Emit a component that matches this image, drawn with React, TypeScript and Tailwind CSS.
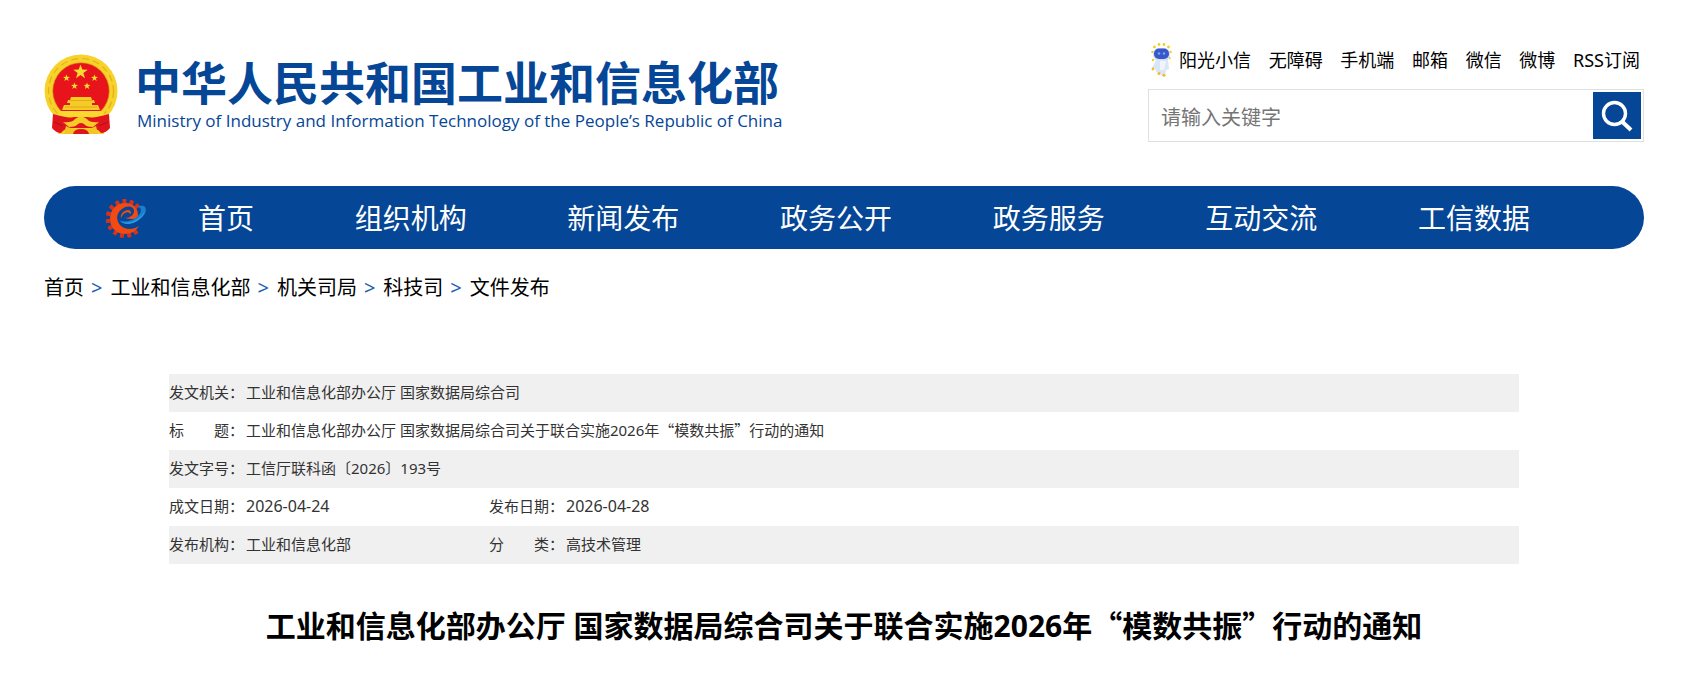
const TOP_LINKS = ["无障碍", "手机端", "邮箱", "微信", "微博", "RSS订阅"];

const NAV_ITEMS = [
  "首页",
  "组织机构",
  "新闻发布",
  "政务公开",
  "政务服务",
  "互动交流",
  "工信数据",
];

const CRUMBS = ["首页", "工业和信息化部", "机关司局", "科技司", "文件发布"];

const STAR = "M0 -10 2.4 -3.2 9.5 -3.1 3.8 1.2 5.9 8.1 0 4 -5.9 8.1 -3.8 1.2 -9.5 -3.1 -2.4 -3.2Z";

const GEAR_TEETH = [52, 76, 100, 124, 148, 172, 196, 220, 244, 268, 292, 314];

function Emblem() {
  return (
    <svg viewBox="0 0 74 80" className="h-20 w-[74px] shrink-0" aria-hidden="true">
      <circle cx="37" cy="37" r="36.5" fill="#f7d22b" />
      <circle cx="37" cy="37" r="32.5" fill="none" stroke="#e3b01c" strokeWidth="1.2" strokeDasharray="7 4" />
      <path d="M20 56h34l6 24H14z" fill="#f7d22b" />
      <circle cx="37" cy="37" r="28.3" fill="#e8141c" stroke="#d8a01a" strokeWidth="0.7" />
      <g fill="#f9dc2f">
        <path d={STAR} transform="translate(36.500 18) scale(0.76)" />
        <path d={STAR} transform="translate(22.500 24) scale(0.36)" />
        <path d={STAR} transform="translate(50.500 24) scale(0.36)" />
        <path d={STAR} transform="translate(30.500 32) scale(0.36)" />
        <path d={STAR} transform="translate(43 32) scale(0.36)" />
      </g>
      <path d="M27 43h20l1 3h2l1 3h-3v2h6l2 5H18l2-5h6v-2h-3l1-3h2z" fill="#f5cb25" />
      <path d="M25 46.500h24M21 53h32" stroke="#dba31c" strokeWidth="0.8" />
      <path d="M17 57h40l5 4-3 2H15l-3-2z" fill="#f9d92f" />
      <path d="M9 60q14 4 22 4h12q8 0 22-4l1 14q-4 5-9 5-4-5-10-5H27q-6 0-10 5-5 0-9-5z" fill="#e0141d" />
      <path d="M19 68q9 1 12-3 6-5 12 0 3 4 12 3l-6 5q-7 0-9-3-3-2-6 0-2 3-9 3z" fill="#f5cb25" />
      <path d="M22 72q4 3 15 3t15-3l2 8H20z" fill="#f3c423" />
      <path d="M29 80q1-5 8-5t8 5z" fill="#e0141d" />
      <path d="M10 68l9 4M64 68l-9 4" stroke="#b80d14" strokeWidth="1" />
    </svg>
  );
}

function Robot() {
  return (
    <svg viewBox="0 0 22 34" className="h-[34px] w-[22px] shrink-0" aria-hidden="true">
      <g fill="#f8cb2c">
        <circle cx="1.500" cy="9" r="1.3" />
        <circle cx="3.500" cy="4" r="1.4" />
        <circle cx="8" cy="1.500" r="1.4" />
        <circle cx="13" cy="1.500" r="1.4" />
        <circle cx="17.500" cy="4" r="1.4" />
        <circle cx="19.500" cy="9" r="1.3" />
        <circle cx="2" cy="17" r="1.2" />
        <circle cx="18.500" cy="15" r="1.2" />
      </g>
      <rect x="2" y="5" width="17" height="13" rx="6" fill="#cfe0f7" />
      <rect x="3" y="5.500" width="15" height="10.500" rx="5" fill="#3a57c8" />
      <circle cx="8" cy="10.500" r="1.3" fill="#6fa6ff" />
      <circle cx="13" cy="10.500" r="1.3" fill="#6fa6ff" />
      <path d="M5 17h12l1 9-3 1-1 6h-3l-2-3-4-1-1-4H1z" fill="#d9e6f6" />
      <path d="M9 18h6l-2 9H9z" fill="#f1f5fb" />
      <g fill="#f5b92c">
        <circle cx="2" cy="26" r="1.4" />
        <circle cx="8" cy="30.500" r="1.5" />
        <circle cx="13" cy="32.300" r="1.5" />
      </g>
    </svg>
  );
}

function GearLogo() {
  return (
    <svg viewBox="0 0 42 40" className="h-10 w-[42px]" aria-hidden="true">
      <g fill="#d8301c">
        {GEAR_TEETH.map((deg) => (
          <rect key={deg} x="34" y="18.500" width="4.500" height="4" rx="0.5" transform={`rotate(${deg} 19 20.500)`} />
        ))}
      </g>
      <path
        d="M32 17C32 9 26 5 19 5 10 5 4 12 4 21c0 9 7 15 15 15 6 0 11-3 14-8-6 4-14 4-19-1-4-5-4-12 2-16 5-4 12-3 12 2 0 4-4 7-9 7 7 2 13 1 13-3z"
        fill="#f24a12"
      />
      <path d="M15 20c-1-4 3-8 7-8 3 0 4 3 2 4-1-2-3-2-5-1-2 1-3 3-4 5z" fill="#f24a12" />
      <path d="M13 22c4 5 12 5 18 1 6-3 11-10 8-14-2-2-5-1-8 0 5 0 5 5 1 9-5 5-13 7-19 4z" fill="#1a7fd0" />
      <path d="M15 24c5 3 11 2 16-1 4-3 7-6 8-10-3 5-7 8-11 10s-9 2-13 1z" fill="#2fa0e6" />
    </svg>
  );
}

function SearchIcon() {
  return (
    <svg viewBox="0 0 32 32" className="size-8" fill="none" stroke="currentColor" aria-hidden="true">
      <circle cx="13.500" cy="13.500" r="11" strokeWidth="3.4" />
      <path d="M21 21.500l9 8.500" strokeWidth="4" />
    </svg>
  );
}

function Header() {
  return (
    <header className="flex items-start justify-between">
      <a href="#" className="mt-[54px] flex items-start text-[#054696]">
        <Emblem />
        <span className="ml-[17px] block">
          <span className="block text-[46px] leading-[56px] font-bold whitespace-nowrap">
            中华人民共和国工业和信息化部
          </span>
          <span className="ml-0.5 block font-['Open_Sans',sans-serif] text-[17px] leading-[22px] whitespace-nowrap">
            Ministry of Industry and Information Technology of the People’s Republic of China
          </span>
        </span>
      </a>

      <div className="mt-[42px] w-[496px]">
        <div className="flex h-[36px] items-center justify-between pr-1 pl-[3px] text-[18px] whitespace-nowrap text-black">
          <a href="#" className="flex items-center gap-1.5">
            <Robot />
            阳光小信
          </a>
          {TOP_LINKS.map((label) => (
            <a key={label} href="#">
              {label}
            </a>
          ))}
        </div>
        <form className="mt-[11px] flex h-[53px] items-center border border-[#e0e0e0] pr-0.5">
          <input
            type="text"
            aria-label="请输入关键字"
            placeholder="请输入关键字"
            className="h-full min-w-0 flex-1 px-3 pt-1 text-[20px] outline-none placeholder:text-[#757575]"
          />
          <button
            type="button"
            aria-label="搜索"
            className="flex h-[47px] w-12 items-center justify-center bg-[#054696] text-white"
          >
            <SearchIcon />
          </button>
        </form>
      </div>
    </header>
  );
}

function Nav() {
  return (
    <nav className="mt-[44px] flex h-[63px] items-center rounded-full bg-[#054696] pr-[114px] pl-[62px] text-white">
      <GearLogo />
      <div className="ml-[50px] flex flex-1 justify-between text-[28px] leading-10 whitespace-nowrap">
        {NAV_ITEMS.map((item) => (
          <a key={item} href="#">
            {item}
          </a>
        ))}
      </div>
    </nav>
  );
}

function Breadcrumb() {
  return (
    <div className="mt-6 flex h-[30px] items-center gap-[7px] text-[20px] text-black">
      {CRUMBS.map((crumb, i) => (
        <span key={crumb} className="flex gap-2">
          {i > 0 && <span className="text-[#1a5fb4]">&gt;</span>}
          <a href="#">{crumb}</a>
        </span>
      ))}
    </div>
  );
}

// The curly quotes need the full-width glyphs of the CJK font
function DocTitle() {
  return (
    <>
      工业和信息化部办公厅 国家数据局综合司关于联合实施2026年
      <span className="font-['Noto_Sans_CJK_SC',sans-serif]">“</span>
      模数共振
      <span className="font-['Noto_Sans_CJK_SC',sans-serif]">”</span>
      行动的通知
    </>
  );
}

function DocInfo() {
  return (
    <table className="w-full table-fixed text-left text-[15px] leading-5 text-[#333333] [&_td]:pb-0.5 [&_th]:pb-0.5">
      <colgroup>
        <col className="w-[77px]" />
        <col className="w-[243px]" />
        <col className="w-[77px]" />
        <col />
      </colgroup>
      <tbody>
        <tr className="h-[38px] bg-[#f0f0f0]">
          <th className="font-normal">发文机关：</th>
          <td colSpan={3}>工业和信息化部办公厅 国家数据局综合司</td>
        </tr>
        <tr className="h-[38px]">
          <th className="font-normal">标　　题：</th>
          <td colSpan={3}>
            <DocTitle />
          </td>
        </tr>
        <tr className="h-[38px] bg-[#f0f0f0]">
          <th className="font-normal">发文字号：</th>
          <td colSpan={3}>工信厅联科函〔2026〕193号</td>
        </tr>
        <tr className="h-[38px]">
          <th className="font-normal">成文日期：</th>
          <td className="text-[16px]">2026-04-24</td>
          <th className="font-normal">发布日期：</th>
          <td className="text-[16px]">2026-04-28</td>
        </tr>
        <tr className="h-[38px] bg-[#f0f0f0]">
          <th className="font-normal">发布机构：</th>
          <td>工业和信息化部</td>
          <th className="font-normal">分　　类：</th>
          <td>高技术管理</td>
        </tr>
      </tbody>
    </table>
  );
}

export default function App() {
  return (
    <div className="bg-white pr-[50px] pb-12 pl-11 font-['Noto_Sans','Noto_Sans_CJK_SC',sans-serif]">
      <Header />
      <Nav />
      <Breadcrumb />
      <main className="mt-[71px] px-[125px]">
        <DocInfo />
        <h1 className="mt-[38px] text-center text-[30px] leading-[45px] font-bold text-black">
          <DocTitle />
        </h1>
      </main>
    </div>
  );
}
